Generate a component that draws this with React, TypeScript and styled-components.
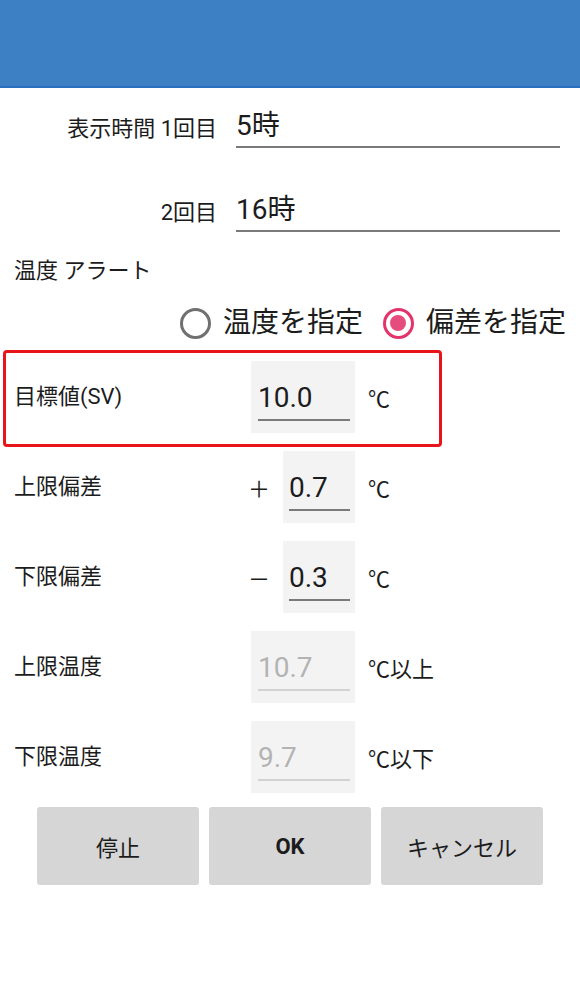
import React from "react";
import styled, { createGlobalStyle, css } from "styled-components";

const GlobalStyle = createGlobalStyle`
  body {
    margin: 0;
    background: #ffffff;
    font-family: Roboto, "Noto Sans CJK JP", sans-serif;
    color: #1c1c1c;
  }
`;

const Page = styled.div`
  width: 580px;
  min-height: 1000px;
  background: #fff;
`;

const Header = styled.header`
  height: 86px;
  background: #3d80c4;
  border-bottom: 2px solid #2a72c0;
`;

const TimeRow = styled.div<{ $first?: boolean }>`
  display: grid;
  grid-template-columns: 217px 1fr;
  column-gap: 19px;
  align-items: center;
  padding-right: 20px;
  margin-top: ${(p) => (p.$first ? "21px" : "45px")};
`;

const TimeLabel = styled.div`
  text-align: right;
  font-size: 22px;
  line-height: 28px;
  white-space: pre;
`;

const TimeField = styled.div`
  font-size: 28px;
  line-height: 34px;
  padding-bottom: 3px;
  border-bottom: 2px solid #7a7a7a;
`;

const SectionLabel = styled.div`
  margin-top: 25px;
  padding-left: 14px;
  font-size: 22px;
  line-height: 28px;
`;

const RadioRow = styled.div`
  margin-top: 22px;
  display: flex;
  justify-content: flex-end;
  align-items: center;
  gap: 20px;
  padding-right: 14px;
  height: 32px;
`;

const RadioOption = styled.label`
  display: flex;
  align-items: center;
  gap: 12px;
  font-size: 28px;
  line-height: 32px;
`;

const RadioCircle = styled.span<{ $checked?: boolean }>`
  box-sizing: border-box;
  width: 31px;
  height: 31px;
  border-radius: 50%;
  border: 3px solid ${(p) => (p.$checked ? "#e3336b" : "#707070")};
  display: flex;
  align-items: center;
  justify-content: center;
  &::after {
    content: "";
    display: ${(p) => (p.$checked ? "block" : "none")};
    width: 16px;
    height: 16px;
    border-radius: 50%;
    background: #e44d7d;
  }
`;

const HighlightBox = styled.div`
  margin: 11px 138px 0 3px;
  border: 3px solid #e8141a;
  border-radius: 4px;
  padding: 8px 0 11px;
`;

const ParamList = styled.div`
  margin-top: 4px;
  display: flex;
  flex-direction: column;
  gap: 18px;
`;

const ParamRow = styled.div<{ $inset?: boolean }>`
  display: grid;
  grid-template-columns: 237px 32px 72px auto;
  align-items: center;
  height: 72px;
  padding-left: ${(p) => (p.$inset ? "8px" : "14px")};
`;

const ParamLabel = styled.div`
  grid-column: 1;
  font-size: 22px;
  line-height: 28px;
`;

const Sign = styled.div`
  grid-column: 2;
  font-family: "Noto Sans CJK JP", sans-serif;
  font-size: 22px;
  line-height: 28px;
  margin-left: -3px;
`;

const Field = styled.div<{ $wide?: boolean }>`
  grid-column: ${(p) => (p.$wide ? "2 / 4" : "3")};
  align-self: stretch;
  background: #f3f3f3;
  display: flex;
  flex-direction: column;
  justify-content: flex-end;
  padding: 0 5px 12px ${(p) => (p.$wide ? "7px" : "6px")};
`;

const FieldValue = styled.div<{ $disabled?: boolean }>`
  font-size: 28px;
  line-height: 34px;
  padding-bottom: 4px;
  border-bottom: 2px solid #7a7a7a;
  ${(p) =>
    p.$disabled &&
    css`
      color: #b3b3b3;
      border-bottom-color: #d2d2d2;
    `}
`;

const Unit = styled.div`
  grid-column: 4;
  padding-left: 13px;
  font-family: "Noto Sans CJK JP", sans-serif;
  font-size: 22px;
  line-height: 28px;
`;

const ButtonRow = styled.div`
  margin-top: 14px;
  display: flex;
  justify-content: center;
  gap: 10px;
`;

const ActionButton = styled.button<{ $bold?: boolean }>`
  width: 162px;
  height: 78px;
  border: none;
  border-radius: 3px;
  background: #d6d6d6;
  font-family: Roboto, "Noto Sans CJK JP", sans-serif;
  font-size: 22px;
  font-weight: ${(p) => (p.$bold ? 700 : 400)};
  color: #1c1c1c;
  padding: 0;
`;

type Param = {
  label: string;
  sign?: string;
  value: string;
  unit: string;
  wide?: boolean;
  disabled?: boolean;
};

const params: Param[] = [
  { label: "上限偏差", sign: "＋", value: "0.7", unit: "℃" },
  { label: "下限偏差", sign: "－", value: "0.3", unit: "℃" },
  { label: "上限温度", value: "10.7", unit: "℃以上", wide: true, disabled: true },
  { label: "下限温度", value: "9.7", unit: "℃以下", wide: true, disabled: true },
];

export default function App() {
  return (
    <>
      <GlobalStyle />
      <Page>
        <Header />
        <TimeRow $first>
          <TimeLabel>表示時間 1回目</TimeLabel>
          <TimeField>5時</TimeField>
        </TimeRow>
        <TimeRow>
          <TimeLabel>2回目</TimeLabel>
          <TimeField>16時</TimeField>
        </TimeRow>

        <SectionLabel>温度 アラート</SectionLabel>
        <RadioRow>
          <RadioOption>
            <RadioCircle />
            温度を指定
          </RadioOption>
          <RadioOption>
            <RadioCircle $checked />
            偏差を指定
          </RadioOption>
        </RadioRow>

        <HighlightBox>
          <ParamRow $inset>
            <ParamLabel>目標値(SV)</ParamLabel>
            <Field $wide>
              <FieldValue>10.0</FieldValue>
            </Field>
            <Unit>℃</Unit>
          </ParamRow>
        </HighlightBox>

        <ParamList>
          {params.map((p) => (
            <ParamRow key={p.label}>
              <ParamLabel>{p.label}</ParamLabel>
              {p.sign && <Sign>{p.sign}</Sign>}
              <Field $wide={p.wide}>
                <FieldValue $disabled={p.disabled}>{p.value}</FieldValue>
              </Field>
              <Unit>{p.unit}</Unit>
            </ParamRow>
          ))}
        </ParamList>

        <ButtonRow>
          <ActionButton>停止</ActionButton>
          <ActionButton $bold>OK</ActionButton>
          <ActionButton>キャンセル</ActionButton>
        </ButtonRow>
      </Page>
    </>
  );
}
